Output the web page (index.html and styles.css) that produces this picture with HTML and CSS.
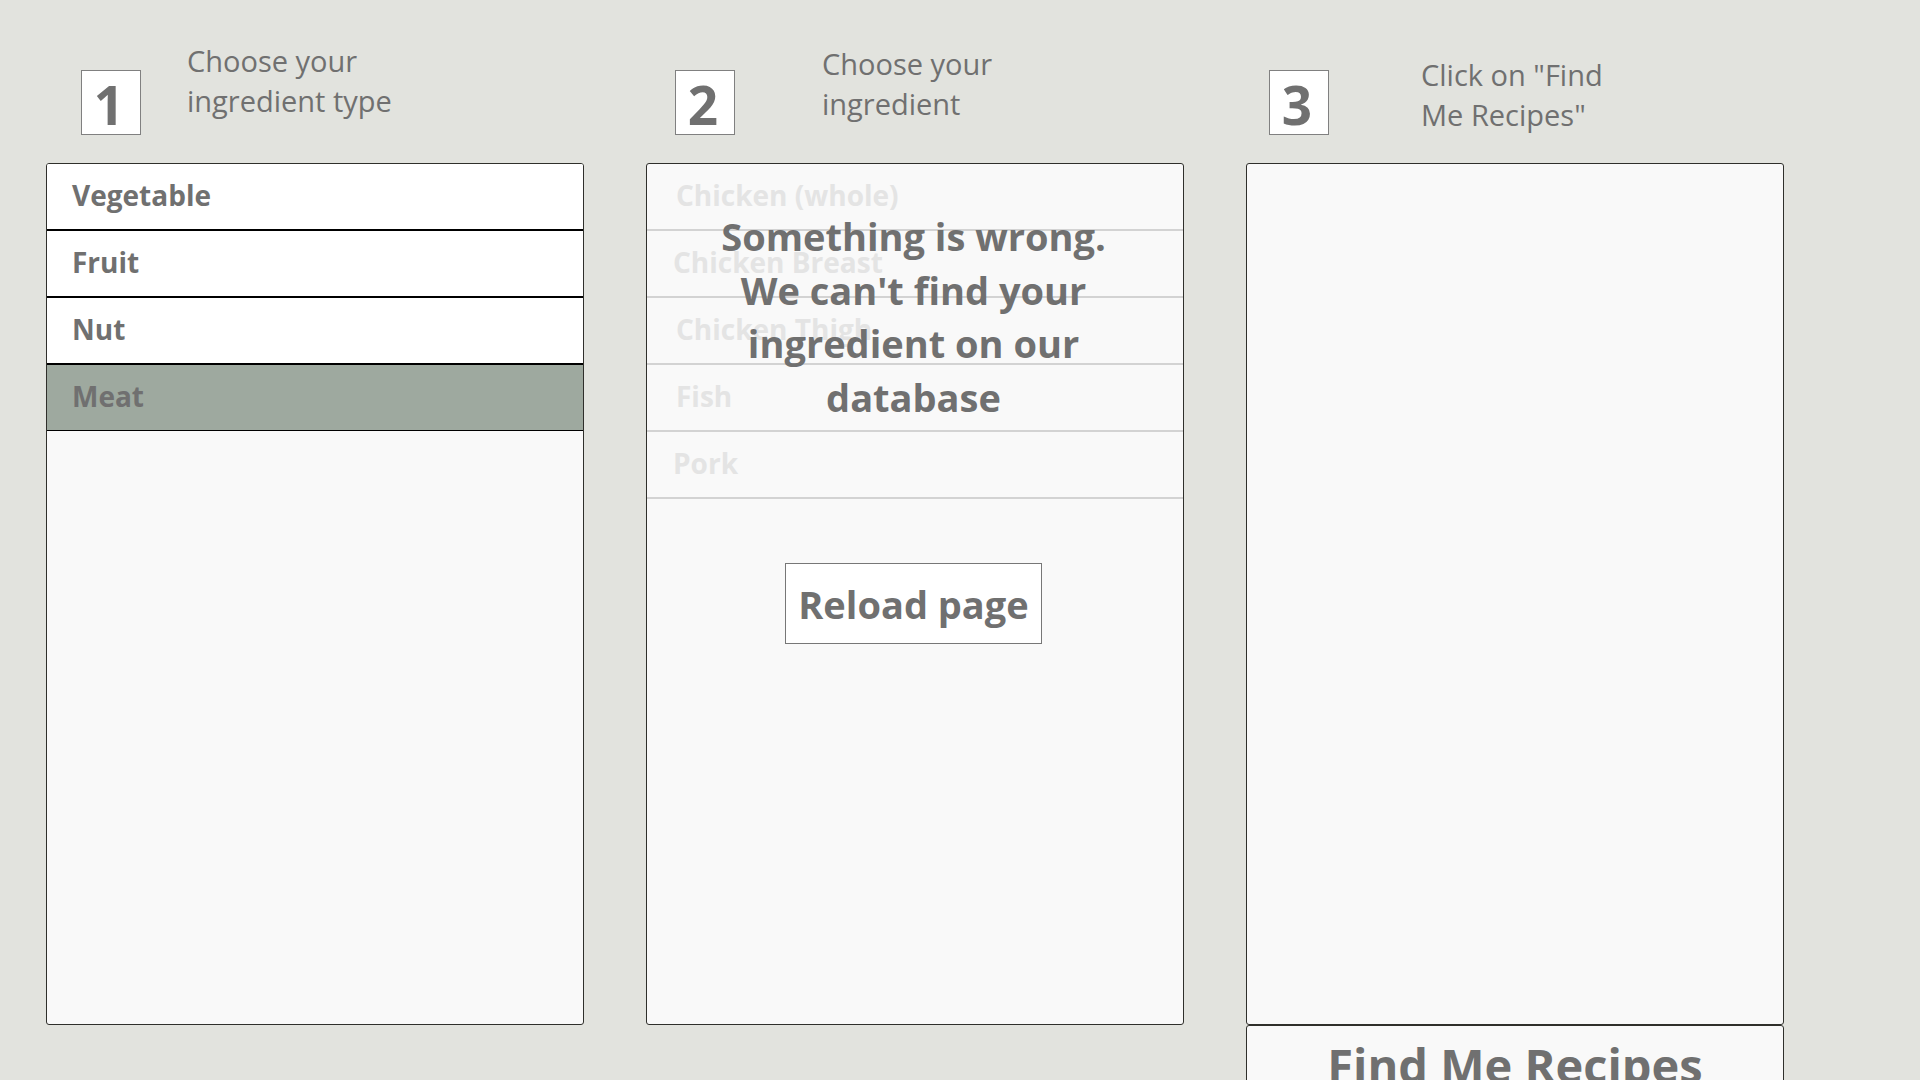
FILE: index.html
```html
<!DOCTYPE html>
<html lang="en">
<head>
<meta charset="utf-8">
<title>Find Me Recipes</title>
<link rel="stylesheet" href="styles.css">
</head>
<body>
<main class="page">
  <section class="col col--one">
    <header class="col-head">
      <div class="step">1</div>
      <p class="step-text">Choose your<br>ingredient type</p>
    </header>
    <div class="panel">
      <ul class="list">
        <li class="type-row">Vegetable</li>
        <li class="type-row">Fruit</li>
        <li class="type-row">Nut</li>
        <li class="type-row type-row--active">Meat</li>
      </ul>
    </div>
  </section>

  <section class="col col--two">
    <header class="col-head">
      <div class="step">2</div>
      <p class="step-text">Choose your<br>ingredient</p>
    </header>
    <div class="panel">
      <ul class="list">
        <li class="ing-row">Chicken (whole)</li>
        <li class="ing-row ing-row--nudge">Chicken Breast</li>
        <li class="ing-row">Chicken Thigh</li>
        <li class="ing-row">Fish</li>
        <li class="ing-row ing-row--nudge">Pork</li>
      </ul>
      <div class="error-overlay">
        <p class="error-msg">Something is wrong. We can't find your ingredient on our database</p>
        <button class="reload" type="button">Reload page</button>
      </div>
    </div>
  </section>

  <section class="col col--three">
    <header class="col-head">
      <div class="step">3</div>
      <p class="step-text">Click on "Find<br>Me Recipes"</p>
    </header>
    <div class="panel"></div>
    <button class="find" type="button">Find Me Recipes</button>
  </section>
</main>
</body>
</html>
```
FILE: styles.css
```css
html {
  overflow: hidden;
}

body {
  margin: 0;
  background: #e2e3de;
  color: #707070;
  font-family: "Open Sans", "Noto Sans", sans-serif;
}

.page {
  display: flex;
  gap: 62px;
  padding-left: 46px;
}

.col {
  width: 538px;
  display: flex;
  flex-direction: column;
}

.col-head {
  height: 163px;
  display: flex;
  align-items: flex-start;
}

.step {
  box-sizing: border-box;
  width: 60px;
  height: 65px;
  margin-top: 70px;
  padding-top: 4px;
  padding-right: 4px;
  border: 1px solid #808080;
  background: #fff;
  display: flex;
  align-items: center;
  justify-content: center;
  font-size: 53px;
  line-height: 1;
  font-weight: 700;
}

.step-text {
  margin: 0;
  font-size: 29px;
  line-height: 40px;
}

.col--one .step { margin-left: 35px; }
.col--one .step-text { margin-left: 46px; margin-top: 41px; }

.col--two .step { margin-left: 29px; }
.col--two .step-text { margin-left: 87px; margin-top: 44px; }

.col--three .step { margin-left: 23px; }
.col--three .step-text { margin-left: 92px; margin-top: 55px; }

.panel {
  position: relative;
  box-sizing: border-box;
  height: 862px;
  border: 1px solid #2f2f2b;
  border-radius: 3px;
  background: #f9f9f9;
  overflow: hidden;
}

.list {
  list-style: none;
  margin: 0;
  padding: 0;
}

.type-row {
  height: 67px;
  box-sizing: border-box;
  padding-left: 25px;
  padding-bottom: 3px;
  display: flex;
  align-items: center;
  background: #fff;
  border-bottom: 2px solid #000;
  font-size: 28px;
  font-weight: 700;
}

.type-row--active {
  background: #9ea99f;
  border-bottom-width: 1px;
  height: 66px;
}

.ing-row {
  height: 67px;
  box-sizing: border-box;
  padding-left: 29px;
  padding-bottom: 3px;
  display: flex;
  align-items: center;
  border-bottom: 2px solid #d3d3d3;
  color: #e4e4e4;
  font-size: 28px;
  font-weight: 700;
}

.ing-row--nudge {
  padding-left: 26px;
}

.error-overlay {
  position: absolute;
  inset: 0;
  display: flex;
  flex-direction: column;
  align-items: center;
  padding-top: 46px;
  padding-right: 3px;
}

.error-msg {
  width: 420px;
  margin: 0;
  text-align: center;
  font-size: 38px;
  line-height: 53.5px;
  font-weight: 700;
  color: #707070;
}

.reload {
  margin-top: 139px;
  width: 257px;
  height: 81px;
  border: 1px solid #777;
  background: #fff;
  color: #707070;
  font-family: inherit;
  font-size: 38px;
  font-weight: 700;
  padding: 0;
}

.find {
  box-sizing: border-box;
  padding: 7px 0 40px;
  border: 1px solid #2f2f2b;
  border-radius: 3px;
  background: #f9f9f9;
  color: #707070;
  font-family: inherit;
  font-size: 47px;
  font-weight: 700;
  line-height: normal;
  display: block;
  width: 100%;
  text-align: center;
}
```
